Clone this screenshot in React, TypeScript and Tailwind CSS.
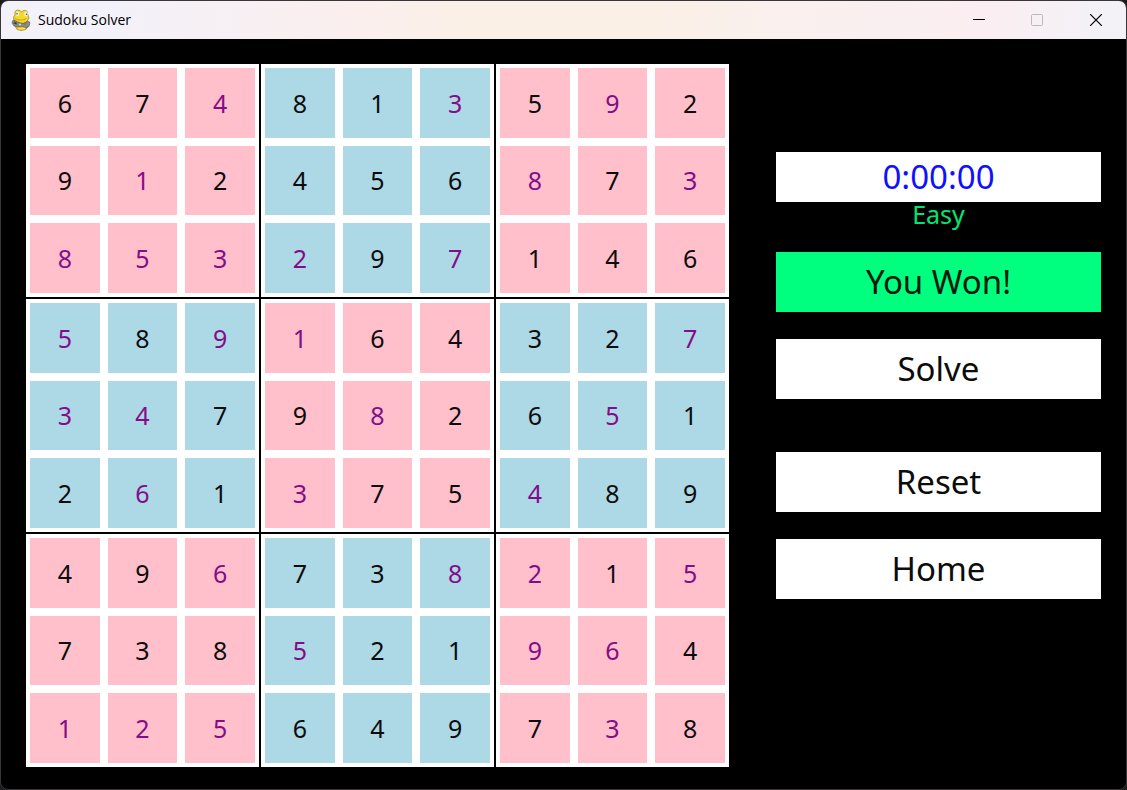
import type { ReactNode } from "react";

// A leading "*" marks a number that was filled in by the player.
const ROWS = [
  "6 7 *4 8 1 *3 5 *9 2",
  "9 *1 2 4 5 6 *8 7 *3",
  "*8 *5 *3 *2 9 *7 1 4 6",
  "*5 8 *9 *1 6 4 3 2 *7",
  "*3 *4 7 9 *8 2 6 *5 1",
  "2 *6 1 *3 7 5 *4 8 9",
  "4 9 *6 7 3 *8 *2 1 *5",
  "7 3 8 *5 2 1 *9 *6 4",
  "*1 *2 *5 6 4 9 7 *3 8",
].map((row) => row.split(" "));

const INDEXES = [0, 1, 2, 3, 4, 5, 6, 7, 8];

function SnakeIcon() {
  return (
    <svg viewBox="0 0 20 22" className="h-[22px] w-5" aria-hidden="true">
      <path d="M5 14 4 17l2 3.500 4 1 5-1 2-3-2-4z" fill="#e8c81c" stroke="#8a7414" strokeWidth="0.6" />
      <path d="M4 2.500 6 1l3 .5L10.500 3 13 1.200l3 1L17 6l1 3-2 3.500-4 2-6-1L3 11l-.5-3L4 6z" fill="#f4d925" stroke="#8a7414" strokeWidth="0.6" />
      <path d="M4 9.500c3 2 8 2 11.500 0" fill="none" stroke="#b09a1c" strokeWidth="0.8" />
      <ellipse cx="6.500" cy="4.800" rx="1.700" ry="2.200" fill="#f5f2df" />
      <ellipse cx="15" cy="5" rx="1.800" ry="2.500" fill="#f5f2df" />
      <circle cx="6" cy="4.800" r="0.800" fill="#555" />
      <circle cx="15.500" cy="5.200" r="0.800" fill="#555" />
      <path d="m2 11 3 1 4 2 4 .5 4-2.500 2 1.500-1 4-3 1.500-3-1.500-5 .5-4-1-2-3z" fill="#8b8b88" stroke="#55554f" strokeWidth="0.6" />
      <path d="m3.500 12.500 1.500 3M2.500 14.200h3.500" stroke="#333" strokeWidth="0.9" />
      <circle cx="14" cy="15" r="0.900" fill="#c3544a" />
      <circle cx="9" cy="15.500" r="1" fill="#ddd" />
      <path d="M7 19.500h7" stroke="#fae34d" strokeWidth="1.300" />
    </svg>
  );
}

function TitleBar() {
  return (
    <header className="flex h-[38px] items-center justify-between bg-[linear-gradient(to_right,#f3f1f9_0%,#f3f1f9_10%,#faeff0_28%,#faf0e6_42%,#faf0e6_58%,#faf0ee_70%,#faeef2_88%,#f3f2f7_98%)] pl-[10px]">
      <div className="flex items-center gap-[7px]">
        <SnakeIcon />
        <h1 className="font-['Open_Sans','Noto_Sans',sans-serif] text-[14px] leading-5 text-black">Sudoku Solver</h1>
      </div>
      <div className="flex h-full">
        <button type="button" aria-label="Minimize" className="flex w-[58px] items-center justify-center">
          <svg viewBox="0 0 12 12" className="size-3" aria-hidden="true">
            <path d="M0 5.500h12" stroke="#000" />
          </svg>
        </button>
        <button type="button" aria-label="Maximize" disabled className="flex w-[58px] items-center justify-center">
          <svg viewBox="0 0 12 12" className="size-3" aria-hidden="true">
            <rect x="0.500" y="0.500" width="11" height="11" rx="1" fill="none" stroke="#bdb8bd" />
          </svg>
        </button>
        <button type="button" aria-label="Close" className="flex w-[60px] items-center justify-center">
          <svg viewBox="0 0 12 12" className="size-3" aria-hidden="true">
            <path d="m0 0 12 12M12 0 0 12" stroke="#000" strokeWidth="1.200" />
          </svg>
        </button>
      </div>
    </header>
  );
}

function Block({ index }: { index: number }) {
  const top = Math.floor(index / 3) * 3;
  const left = (index % 3) * 3;
  const colour = index % 2 === 0 ? "bg-[#ffc0cb]" : "bg-[#add8e6]";
  return (
    <div className="grid size-[233px] grid-cols-3 grid-rows-3 gap-2 bg-white p-1">
      {INDEXES.map((i) => {
        const value = ROWS[top + Math.floor(i / 3)][left + (i % 3)];
        const ink = value.startsWith("*") ? "text-[#850c88]" : "text-[#0c0c0c]";
        return (
          <button key={i} type="button" className={`flex items-center justify-center text-[25px] leading-9 ${colour} ${ink}`}>
            {value.replace("*", "")}
          </button>
        );
      })}
    </div>
  );
}

function ActionButton({ children }: { children: ReactNode }) {
  return (
    <button type="button" className="h-[60px] w-full bg-white text-[33px] leading-[60px] text-[#0c0c0c]">
      {children}
    </button>
  );
}

export default function App() {
  return (
    <div className="flex min-h-screen flex-col bg-[#1c1c1c] font-['Noto_Sans',sans-serif]">
      <div className="flex grow flex-col overflow-hidden rounded-lg border border-[#38363a] bg-black">
        <TitleBar />
        <main className="flex grow items-start gap-[47px] px-[25px] pt-[25px] pb-[22px]">
          <section aria-label="Sudoku board" className="grid shrink-0 grid-cols-3 gap-[2px]">
            {INDEXES.map((i) => (
              <Block key={i} index={i} />
            ))}
          </section>
          <aside className="flex grow flex-col pt-[88px] text-center">
            <p className="h-[50px] bg-white text-[33px] leading-[50px] text-[#1010ff]">0:00:00</p>
            <p className="mb-[26px] text-[25px] leading-6 text-[#00e673]">Easy</p>
            <p className="mb-[27px] h-[60px] bg-[#00ff7f] text-[33px] leading-[60px] text-[#001a0d]">You Won!</p>
            <div className="flex flex-col gap-[53px]">
              <ActionButton>Solve</ActionButton>
              <div className="flex flex-col gap-[27px]">
                <ActionButton>Reset</ActionButton>
                <ActionButton>Home</ActionButton>
              </div>
            </div>
          </aside>
        </main>
      </div>
    </div>
  );
}
